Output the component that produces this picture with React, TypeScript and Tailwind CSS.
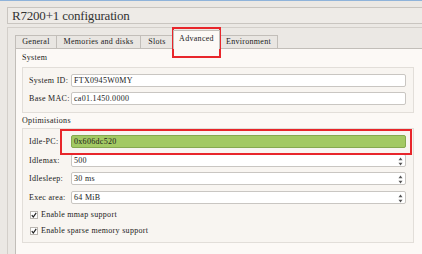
import React from "react";

const Spin = () => (
  <svg width="5" height="9" viewBox="0 0 5 9" className="absolute right-[2px] top-[2px]">
    <path d="M2.5 0.5 L4.5 3.2 L0.5 3.2 Z" fill="#555" />
    <path d="M2.5 8.5 L4.5 5.8 L0.5 5.8 Z" fill="#555" />
  </svg>
);

const Field = ({
  label,
  value,
  spin,
  green,
  cls,
}: {
  label: string;
  value: string;
  spin?: boolean;
  green?: boolean;
  cls: string;
}) => (
  <div className={`flex items-center h-[13px] ${cls}`}>
    <div className="w-[42px] shrink-0 leading-[13px]">{label}</div>
    <div
      className={`relative w-[335px] h-[13px] rounded-[2px] border pl-[2px] leading-[11px] ${
        green
          ? "bg-[#a3c963] border-[#86a94f]"
          : "bg-white border-[#c9c6c2]"
      }`}
    >
      {value}
      {spin && <Spin />}
    </div>
  </div>
);

const Check = ({ label, cls }: { label: string; cls: string }) => (
  <div className={`flex items-center h-[9px] ${cls}`}>
    <div className="w-[8px] h-[8px] ml-[1px] border border-[#b9b5b0] bg-white flex items-center justify-center">
      <svg width="6" height="6" viewBox="0 0 6 6">
        <path d="M0.8 3.2 L2.3 5 L5.2 0.8" stroke="#222" strokeWidth="1.2" fill="none" />
      </svg>
    </div>
    <div className="ml-[3px] leading-[9px]">{label}</div>
  </div>
);

export default function App() {
  const tabs = [
    { t: "General", w: "w-[41px]" },
    { t: "Memories and disks", w: "w-[84px]" },
    { t: "Slots", w: "w-[33px]" },
  ];
  return (
    <div className="relative w-[422px] h-[254px] overflow-hidden bg-[#ebe8e4] text-[8px] tracking-[0.3px] text-[#1a1a1a] font-['Liberation_Serif',serif]">
      <div className="h-[1px] bg-[#8fb3da]" />
      <div className="mt-[6px] ml-[7px] h-[17px] border border-r-0 border-[#c9c5c0] bg-[#eeebe7] flex items-center pl-[4px] text-[13px] tracking-[-0.2px] text-[#333] leading-[15px]">
        R7200+1 configuration
      </div>
      <div className="mt-[3px] ml-[7px] h-[240px] border-l border-t border-[#d3cfca] pl-[7px] pt-[2px]">
        <div className="flex items-end h-[18px]">
          {tabs.map((x) => (
            <div
              key={x.t}
              className={`${x.w} h-[13px] border border-b-0 border-r-0 border-[#c2beb9] bg-[#e9e6e2] flex items-center justify-center leading-[12px]`}
            >
              {x.t}
            </div>
          ))}
          <div className="w-[47px] h-[19px] -mb-[1px] relative z-10 border border-b-0 border-[#c2beb9] bg-[#fcf9f6] flex items-center justify-center leading-[12px] pb-[2px]">
            Advanced
          </div>
          <div className="w-[58px] h-[13px] border border-b-0 border-l-0 border-[#c2beb9] bg-[#e9e6e2] flex items-center justify-center leading-[12px]">
            Environment
          </div>
        </div>
        <div className="h-[220px] border-l border-t border-[#c2beb9] bg-[#fcf9f6] pl-[6px]">
          <div className="mt-[4px] h-[10px] leading-[10px] pl-[0px]">System</div>
          <div className="mt-[4px] w-[392px] border border-[#e2ded9] bg-[#f8f5f1] pl-[6px] pt-[6px] pb-[7px]">
            <Field label="System ID:" value="FTX0945W0MY" cls="" />
            <Field label="Base MAC:" value="ca01.1450.0000" cls="mt-[5px]" />
          </div>
          <div className="mt-[3px] h-[10px] leading-[10px]">Optimisations</div>
          <div className="mt-[2px] w-[392px] h-[115px] border border-[#e2ded9] bg-[#f8f5f1] pl-[6px] pt-[6px]">
            <Field label="Idle-PC:" value="0x606dc520" green cls="" />
            <Field label="Idlemax:" value="500" spin cls="mt-[6px]" />
            <Field label="Idlesleep:" value="30 ms" spin cls="mt-[5px]" />
            <Field label="Exec area:" value="64 MiB" spin cls="mt-[6px]" />
            <Check label="Enable mmap support" cls="mt-[6px]" />
            <Check label="Enable sparse memory support" cls="mt-[7px]" />
          </div>
        </div>
      </div>
      <div className="absolute left-[172px] top-[27px] w-[49px] h-[31px] border-2 border-[#e8262b]" />
      <div className="absolute left-[60px] top-[129px] w-[352px] h-[26px] border-2 border-[#e8262b]" />
    </div>
  );
}
